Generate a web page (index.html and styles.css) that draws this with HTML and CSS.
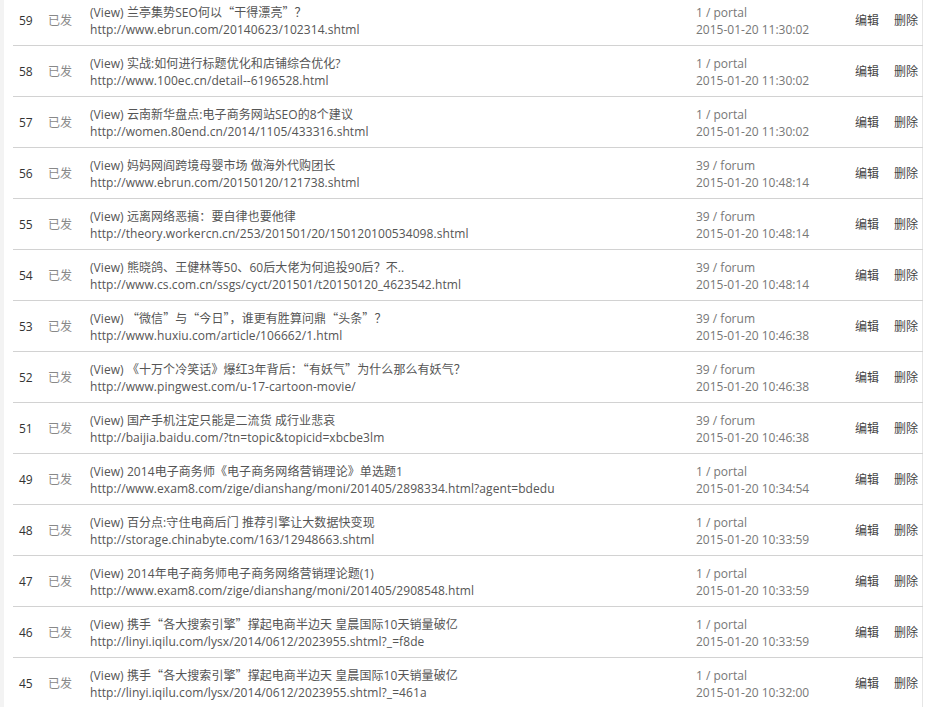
FILE: index.html
```html
<!DOCTYPE html>
<html lang="zh">
<head>
<meta charset="utf-8">
<link rel="stylesheet" href="styles.css">
</head>
<body>
<div class="page">
<table class="list">
<tbody>
<tr><td class="num">59</td><td class="st">已发</td><td class="main"><div>(View) 兰亭集势SEO何以<span class="q">“</span>干得漂亮<span class="q">”？</span></div><div>http://www.ebrun.com/20140623/102314.shtml</div></td><td class="meta"><div>1 / portal</div><div>2015-01-20 11:30:02</div></td><td class="act"><a>编辑</a><a>删除</a></td></tr>
<tr><td class="num">58</td><td class="st">已发</td><td class="main"><div>(View) 实战:如何进行标题优化和店铺综合优化?</div><div>http://www.100ec.cn/detail--6196528.html</div></td><td class="meta"><div>1 / portal</div><div>2015-01-20 11:30:02</div></td><td class="act"><a>编辑</a><a>删除</a></td></tr>
<tr><td class="num">57</td><td class="st">已发</td><td class="main"><div>(View) 云南新华盘点:电子商务网站SEO的8个建议</div><div>http://women.80end.cn/2014/1105/433316.shtml</div></td><td class="meta"><div>1 / portal</div><div>2015-01-20 11:30:02</div></td><td class="act"><a>编辑</a><a>删除</a></td></tr>
<tr><td class="num">56</td><td class="st">已发</td><td class="main"><div>(View) 妈妈网阎跨境母婴市场 做海外代购团长</div><div>http://www.ebrun.com/20150120/121738.shtml</div></td><td class="meta"><div>39 / forum</div><div>2015-01-20 10:48:14</div></td><td class="act"><a>编辑</a><a>删除</a></td></tr>
<tr><td class="num">55</td><td class="st">已发</td><td class="main"><div>(View) 远离网络恶搞<span class="q">：</span>要自律也要他律</div><div>http://theory.workercn.cn/253/201501/20/150120100534098.shtml</div></td><td class="meta"><div>39 / forum</div><div>2015-01-20 10:48:14</div></td><td class="act"><a>编辑</a><a>删除</a></td></tr>
<tr><td class="num">54</td><td class="st">已发</td><td class="main"><div>(View) 熊晓鸽、王健林等50、60后大佬为何追投90后<span class="q">？</span>不..</div><div>http://www.cs.com.cn/ssgs/cyct/201501/t20150120_4623542.html</div></td><td class="meta"><div>39 / forum</div><div>2015-01-20 10:48:14</div></td><td class="act"><a>编辑</a><a>删除</a></td></tr>
<tr><td class="num">53</td><td class="st">已发</td><td class="main"><div>(View) <span class="q">“</span>微信<span class="q">”</span>与<span class="q">“</span>今日<span class="q">”，</span>谁更有胜算问鼎<span class="q">“</span>头条<span class="q">”？</span></div><div>http://www.huxiu.com/article/106662/1.html</div></td><td class="meta"><div>39 / forum</div><div>2015-01-20 10:46:38</div></td><td class="act"><a>编辑</a><a>删除</a></td></tr>
<tr><td class="num">52</td><td class="st">已发</td><td class="main"><div>(View) 《十万个冷笑话》爆红3年背后<span class="q">：“</span>有妖气<span class="q">”</span>为什么那么有妖气<span class="q">？</span></div><div>http://www.pingwest.com/u-17-cartoon-movie/</div></td><td class="meta"><div>39 / forum</div><div>2015-01-20 10:46:38</div></td><td class="act"><a>编辑</a><a>删除</a></td></tr>
<tr><td class="num">51</td><td class="st">已发</td><td class="main"><div>(View) 国产手机注定只能是二流货 成行业悲哀</div><div>http://baijia.baidu.com/?tn=topic&amp;topicid=xbcbe3lm</div></td><td class="meta"><div>39 / forum</div><div>2015-01-20 10:46:38</div></td><td class="act"><a>编辑</a><a>删除</a></td></tr>
<tr><td class="num">49</td><td class="st">已发</td><td class="main"><div>(View) 2014电子商务师《电子商务网络营销理论》单选题1</div><div>http://www.exam8.com/zige/dianshang/moni/201405/2898334.html?agent=bdedu</div></td><td class="meta"><div>1 / portal</div><div>2015-01-20 10:34:54</div></td><td class="act"><a>编辑</a><a>删除</a></td></tr>
<tr><td class="num">48</td><td class="st">已发</td><td class="main"><div>(View) 百分点:守住电商后门 推荐引擎让大数据快变现</div><div>http://storage.chinabyte.com/163/12948663.shtml</div></td><td class="meta"><div>1 / portal</div><div>2015-01-20 10:33:59</div></td><td class="act"><a>编辑</a><a>删除</a></td></tr>
<tr><td class="num">47</td><td class="st">已发</td><td class="main"><div>(View) 2014年电子商务师电子商务网络营销理论题(1)</div><div>http://www.exam8.com/zige/dianshang/moni/201405/2908548.html</div></td><td class="meta"><div>1 / portal</div><div>2015-01-20 10:33:59</div></td><td class="act"><a>编辑</a><a>删除</a></td></tr>
<tr><td class="num">46</td><td class="st">已发</td><td class="main"><div>(View) 携手<span class="q">“</span>各大搜索引擎<span class="q">”</span>撑起电商半边天 皇晨国际10天销量破亿</div><div>http://linyi.iqilu.com/lysx/2014/0612/2023955.shtml?_=f8de</div></td><td class="meta"><div>1 / portal</div><div>2015-01-20 10:33:59</div></td><td class="act"><a>编辑</a><a>删除</a></td></tr>
<tr><td class="num">45</td><td class="st">已发</td><td class="main"><div>(View) 携手<span class="q">“</span>各大搜索引擎<span class="q">”</span>撑起电商半边天 皇晨国际10天销量破亿</div><div>http://linyi.iqilu.com/lysx/2014/0612/2023955.shtml?_=461a</div></td><td class="meta"><div>1 / portal</div><div>2015-01-20 10:32:00</div></td><td class="act"><a>编辑</a><a>删除</a></td></tr>
</tbody>
</table>
</div>
</body>
</html>
```
FILE: styles.css
```css
html, body {
  margin: 0;
  padding: 0;
  background: #fff;
  overflow: hidden;
}
body {
  font-family: "Open Sans", "Noto Sans CJK SC", sans-serif;
  font-size: 12px;
  color: #555;
}
.page {
  border-left: 4px solid #f3f3f3;
  padding-left: 9px;
  height: 707px;
  overflow: hidden;
}
.list {
  width: 910px;
  border-collapse: collapse;
  margin-top: -5px;
  border-right: 1px solid #e6e6e6;
}
.list td {
  height: 49px;
  padding: 1px 0 0 0;
  border-bottom: 1px solid #d2d2d2;
  vertical-align: middle;
  line-height: 17px;
}
.q {
  font-family: "Noto Sans CJK SC", sans-serif;
}
.main {
  letter-spacing: 0.07px;
}
.num {
  width: 29px;
  padding-left: 6px !important;
  color: #333;
}
.st {
  width: 42px;
  color: #888;
}
.main {
  color: #555;
}
.meta {
  width: 159px;
  color: #777;
}
.act {
  width: 67px;
  color: #444;
  white-space: nowrap;
}
.act a {
  margin-right: 15px;
}
.act a:last-child {
  margin-right: 0;
}
```
